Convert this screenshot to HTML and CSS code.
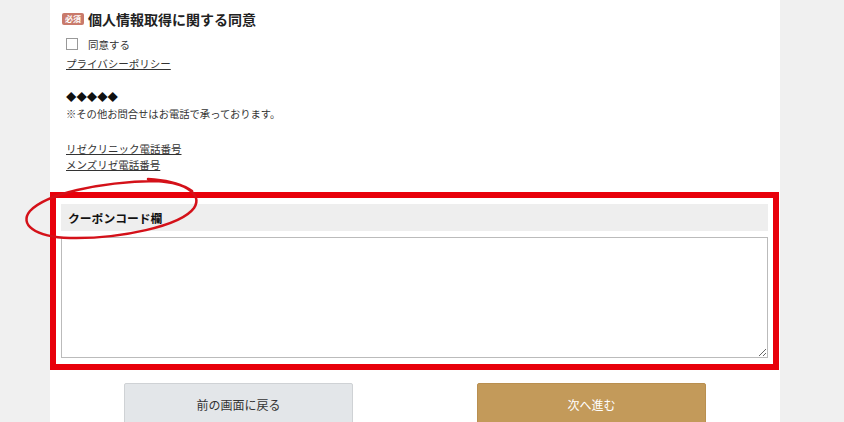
FILE: index.html
```html
<!DOCTYPE html>
<html lang="ja">
<head>
  <meta charset="UTF-8">
  <meta name="viewport" content="width=device-width, initial-scale=1.0">
  <title>クーポンコード欄</title>
  <link rel="stylesheet" href="styles.css">
</head>
<body>
  <div class="panel">
    <div class="consent">
      <div class="consent-title"><span class="badge">必須</span>個人情報取得に関する同意</div>
      <label class="check-row"><span class="checkbox"></span>同意する</label>
      <a class="link privacy" href="#">プライバシーポリシー</a>
    </div>

    <div class="contact">
      <div class="diamonds">◆◆◆◆◆</div>
      <p class="note">※その他お問合せはお電話で承っております。</p>
      <a class="link phone" href="#">リゼクリニック電話番号</a>
      <a class="link phone2" href="#">メンズリゼ電話番号</a>
    </div>

    <div class="coupon-box">
      <div class="coupon-head">クーポンコード欄</div>
      <textarea class="coupon-input"></textarea>
    </div>

    <div class="buttons">
      <button class="btn btn-back">前の画面に戻る</button>
      <button class="btn btn-next">次へ進む</button>
    </div>
  </div>

  <!-- hand drawn marker round the heading -->
  <svg class="marker" width="844" height="422" viewBox="0 0 844 422">
    <path d="M148 179 C182 181 204 193 194 208 C181 226 120 239 70 238 C34 237 19 224 30 211 C46 194 98 182 156 181 C172 182 184 185 192 191" fill="none" stroke="#d41119" stroke-width="2.5" stroke-linecap="round"/>
  </svg>
</body>
</html>
```

FILE: styles.css
```css
body {
  margin: 0;
  background-color: #f0f0f0;
  font-family: "Noto Sans CJK JP", "Noto Sans", sans-serif;
  color: #333;
  height: 422px;
  overflow: hidden;
  position: relative;
}
.panel {
  width: 730px;
  margin-left: 50px;
  background-color: #fff;
  height: 422px;
}
.consent {
  padding: 12px 0 0 12px;
}
.consent-title {
  display: flex;
  align-items: center;
  height: 14px;
  font-size: 14px;
  font-weight: bold;
  color: #222;
}
.badge {
  display: inline-block;
  width: 22px;
  height: 12px;
  line-height: 12px;
  margin-right: 4px;
  background-color: #c97a6b;
  border-radius: 2px;
  color: #fff;
  font-size: 8px;
  text-align: center;
}
.check-row {
  display: flex;
  align-items: center;
  height: 14px;
  margin: 11px 0 0 4px;
  font-size: 10.5px;
}
.checkbox {
  width: 10px;
  height: 10px;
  border: 1px solid #999;
  margin-right: 10px;
}
.link {
  display: block;
  height: 14px;
  line-height: 14px;
  font-size: 10.5px;
  color: #333;
  text-decoration: underline;
}
.privacy {
  margin: 6px 0 0 4px;
}
.contact {
  padding-left: 16px;
}
.diamonds {
  margin-top: 19px;
  height: 14px;
  line-height: 14px;
  font-size: 10.4px;
  color: #111;
}
.note {
  margin: 3px 0 0;
  height: 14px;
  line-height: 14px;
  font-size: 10.3px;
}
.phone {
  margin-top: 21px;
}
.phone2 {
  margin-top: 2px;
}
.coupon-box {
  margin-top: 20px;
  border: 6px solid #e8000b;
  padding: 6px 5px;
  width: 707px;
}
.coupon-head {
  height: 27px;
  line-height: 27px;
  padding-left: 7px;
  background-color: #eeeeee;
  font-size: 11.8px;
  font-weight: bold;
  color: #111;
}
.coupon-input {
  display: block;
  box-sizing: border-box;
  width: 100%;
  height: 121px;
  margin-top: 6px;
  border: 1px solid #bbb;
  resize: vertical;
}
.buttons {
  display: flex;
  justify-content: center;
  gap: 124px;
  margin-top: 13px;
}
.btn {
  width: 229px;
  height: 42px;
  border-radius: 2px;
  font-family: inherit;
  font-size: 12px;
}
.btn-back {
  background-color: #e3e6e9;
  border: 1px solid #cfd2d5;
  color: #333;
}
.btn-next {
  background-color: #c39a5a;
  border: 1px solid #b98f50;
  color: #fff;
}
.marker {
  position: absolute;
  top: 0;
  left: 0;
  pointer-events: none;
}
```
